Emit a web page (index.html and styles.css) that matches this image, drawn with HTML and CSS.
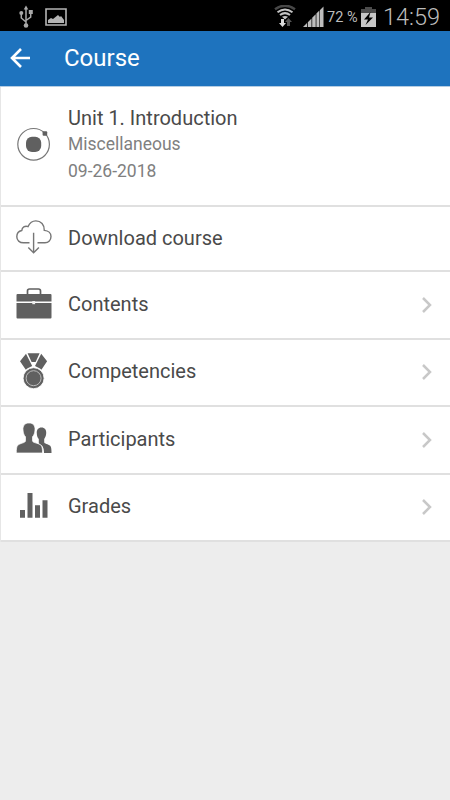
FILE: index.html
```html
<!DOCTYPE html>
<html lang="en">
<head>
  <meta charset="UTF-8" />
  <meta name="viewport" content="width=device-width, initial-scale=1.0"/>
  <title>Course</title>
  <link rel="stylesheet" href="styles.css">
</head>
<body>

  <div class="status-bar">
    <svg class="usb" width="14" height="24" viewBox="0 0 14 24" fill="#a9a9a9" stroke="#a9a9a9">
      <path d="M7 3v17M2.3 8v5L7 17M11.700 7v5L7 15.500" fill="none" stroke-width="1.500"/>
      <path d="M7 .5l2.300 4H4.700z" stroke="none"/>
      <circle cx="2.300" cy="8" r="2" stroke="none"/>
      <path d="M9.800 5h4v4h-4z" stroke="none"/>
      <circle cx="7" cy="20.500" r="2.300" stroke="none"/>
    </svg>
    <svg class="photo" width="22" height="18" viewBox="0 0 22 18">
      <path d="M1 1h20v16H1z" fill="none" stroke="#b4b4b4" stroke-width="1.600"/>
      <path d="M3 15v-3l3-2 2 1 5-4 2 2 1-1 3 4v3z" fill="#b4b4b4"/>
    </svg>
    <svg class="wifi" width="22" height="23" viewBox="0 0 22 23" fill="none">
      <path d="M1 4.200Q11-2.800 21 4.200" stroke="#484848" stroke-width="2.400"/>
      <path d="M3.500 7.300Q11 1.800 18.500 7.300M6 10Q11 6.200 16 10" stroke="#c4c4c4" stroke-width="2"/>
      <path d="M8 11.800Q11 10 14 11.800L11 14.500z" fill="#c4c4c4"/>
      <path d="M7 14h3v4h2l-3.500 4L5 18h2z" fill="#ddd"/>
      <path d="M13 21v-4h-2l3.500-4 3.500 4h-2v4z" fill="#555"/>
    </svg>
    <svg class="signal" width="22" height="22" viewBox="0 0 22 22" fill="#bdbdbd">
      <path d="M1 21l4-4v4zM5.800 16.200l3.700-3.700V21H5.800zM10.200 11.800l3.500-3.500V21h-3.500zM14.400 7.600l3-3V21h-3zM18 4l3.500-3.500V21H18z"/>
    </svg>
    <span class="battery-level">72 %</span>
    <svg class="battery" width="15" height="20" viewBox="0 0 15 20">
      <path d="M4 0h7v2h4v5H0V2h4z" fill="#4c4c4c"/>
      <path d="M0 6h15v14H0z" fill="#c6c6c6"/>
      <path d="M9.500 5L3 12.500h4L4.500 18 12 10.500H8z" fill="#000"/>
    </svg>
    <span class="clock">14:59</span>
  </div>

  <div class="header">
    <svg class="back" width="21" height="20" viewBox="0 0 21 20" fill="none" stroke="#fff" stroke-width="2.600">
      <path d="M11 1L2 10l9 9M2 10h18"/>
    </svg>
    <h1>Course</h1>
  </div>

  <div class="list">
    <div class="item summary">
      <svg class="icon" width="36" height="36" viewBox="0 0 36 36">
        <circle cx="17.600" cy="18.300" r="15.800" fill="none" stroke="#777" stroke-width="1.200"/>
        <rect x="10" y="10.800" width="15.200" height="15.200" rx="6" fill="#606060"/>
        <rect x="26.600" y="5.200" width="4.600" height="4.600" rx="1" fill="#606060"/>
      </svg>
      <div class="details">
        <div class="label">Unit 1. Introduction</div>
        <div class="category">Miscellaneous</div>
        <div class="date">09-26-2018</div>
      </div>
    </div>

    <div class="item download">
      <svg class="icon" width="36" height="36" viewBox="0 0 36 36" fill="none" stroke="#767676" stroke-width="1.400">
        <path d="M13.500 22.800H7.500C3.500 22.800.8 20.300.8 16.800c0-3.300 2.200-5.800 5-6.300C6 7.200 8.800 5.600 12 6.600 13.800 2.700 16.500.9 19.800.9c5.200 0 8.700 4 8.500 9.500 4 .3 6.700 2.800 6.700 6.200 0 3.500-2.500 6.200-6 6.200h-7.500"/>
        <path d="M17.600 12.800v20M12.300 27.500l5.300 5.300 5.300-5.300"/>
      </svg>
      <div class="label">Download course</div>
    </div>

    <div class="item">
      <svg class="icon" width="36" height="36" viewBox="0 0 36 36" fill="#606060">
        <path d="M11.500 8V5q0-2 2-2h9q2 0 2 2v3" fill="none" stroke="#606060" stroke-width="1.700"/>
        <path d="M1.500 8h33q1 0 1 1v6.600H.5V9q0-1 1-1zM.5 17h35v14.500q0 1-1 1h-33q-1 0-1-1z"/>
        <rect x="16.300" y="15" width="2.800" height="3.200" fill="#eee"/>
      </svg>
      <div class="label">Contents</div>
      <svg class="arrow" width="11" height="18" viewBox="0 0 11 18"><path d="M2 2l7 7-7 7"/></svg>
    </div>

    <div class="item">
      <svg class="icon" width="36" height="36" viewBox="0 0 36 36" fill="#606060">
        <path d="M10 .8l6.200 12.200-5 2.500-1.400 1.300L4 8.300zM25.200.8l5.900 7.500-5.700 8.500-1.400-1.300-5-2.500zM11.600.3h12l-4 8.800h-4z"/>
        <circle cx="17.600" cy="25.200" r="10.500" stroke="#fff" stroke-width=".8"/>
        <circle cx="17.600" cy="25.200" r="7.500" fill="none" stroke="#bbb" stroke-width="1"/>
      </svg>
      <div class="label">Competencies</div>
      <svg class="arrow" width="11" height="18" viewBox="0 0 11 18"><path d="M2 2l7 7-7 7"/></svg>
    </div>

    <div class="item">
      <svg class="icon" width="36" height="36" viewBox="0 0 36 36" fill="#606060">
        <path d="M25.500 6.500c3.200 0 5 2.300 4.700 5.800-.1 2.700-1 4.300-2 5.700v3.200c0 1.300 4 2 6 3.500 1.200 1 1.300 4.300 1.300 7.300H28c0-6-1.500-7.500-5.200-9.500v-4.500c-1.200-1.300-2-3-2-5.700-.3-3.500 1.500-5.800 4.700-5.800z"/>
        <path d="M13 2c4 0 6.400 2.600 6 7-.2 3-1 5.300-2.500 6.800v4c0 2 5.200 2.200 8 4 1.900 1.300 2 4.500 2 8.200H.3c0-3.700.1-6.900 2-8.200 2.800-1.800 7.200-2 7.200-4v-4C8 14.300 7.200 12 7 9 6.600 4.600 9 2 13 2z" stroke="#fff" stroke-width=".7"/>
      </svg>
      <div class="label">Participants</div>
      <svg class="arrow" width="11" height="18" viewBox="0 0 11 18"><path d="M2 2l7 7-7 7"/></svg>
    </div>

    <div class="item">
      <svg class="icon" width="36" height="36" viewBox="0 0 36 36" fill="#606060">
        <path d="M4 22h5v7.800H4zM11.500 5h5v24.800h-5zM19 17.300h5v12.500h-5zM26.500 12.300h5v17.500h-5z"/>
      </svg>
      <div class="label">Grades</div>
      <svg class="arrow" width="11" height="18" viewBox="0 0 11 18"><path d="M2 2l7 7-7 7"/></svg>
    </div>
  </div>

</body>
</html>
```

FILE: styles.css
```css
* {
  box-sizing: border-box;
}

body {
  margin: 0;
  font-family: Roboto, sans-serif;
  background: #ededed;
}

svg {
  display: block;
  flex: none;
}

.status-bar {
  display: flex;
  align-items: center;
  height: 31px;
  padding: 2px 10px 0 19px;
  background: #000;
  color: #bdbdbd;
}

.photo {
  margin-left: 12px;
}

.wifi {
  margin-left: auto;
}

.signal {
  margin: 0 3px 0 6px;
}

.battery-level {
  width: 31px;
  padding-top: 2px;
  font-size: 14.5px;
  white-space: nowrap;
}

.battery {
  margin: 0 7px 0 3px;
}

.clock {
  width: 57px;
  font-size: 23.5px;
  font-weight: 300;
}

.header {
  display: flex;
  align-items: center;
  height: 56px;
  padding: 0 10px 1px;
  background: #1e73be;
  border-bottom: 1px solid #b5cde3;
}

h1 {
  margin: 0 0 0 33px;
  font-size: 24px;
  font-weight: 400;
  color: #fff;
}

.list {
  background: #fff;
  border-left: 1px solid #e6e6e6;
}

.item {
  display: flex;
  align-items: center;
  height: 67.5px;
  padding: 0 18px 0 15px;
  border-bottom: 2px solid #e0e0e0;
}

.summary {
  height: 120px;
  padding-bottom: 3px;
}

.download {
  height: 65px;
}

.icon {
  margin-bottom: 2px;
}

.details,
.label {
  margin-left: 16px;
  padding-bottom: 2px;
}

.details {
  padding-bottom: 0;
}

.details .label {
  margin-left: 0;
  padding-bottom: 0;
}

.download .label {
  padding-bottom: 1px;
}

.label {
  font-size: 20px;
  line-height: 26px;
  color: #4a4a4a;
}

.category,
.date {
  font-size: 17.5px;
  line-height: 26px;
  color: #808080;
}

.date {
  line-height: 28px;
}

.arrow {
  margin-left: auto;
  fill: none;
  stroke: #c8c8c8;
  stroke-width: 2.5;
}
```
